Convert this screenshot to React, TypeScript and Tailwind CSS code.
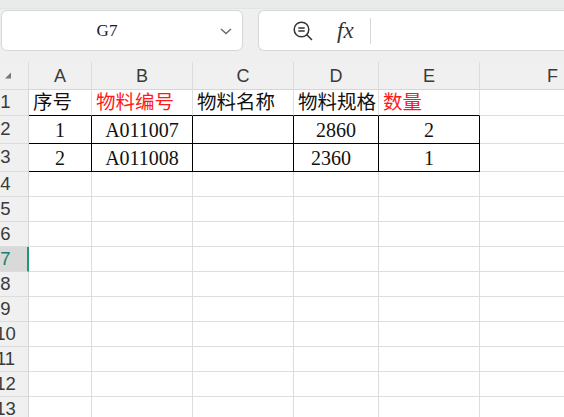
import React from "react";

const cols = ["A", "B", "C", "D", "E", "F"];
const serif = "font-['Liberation_Serif','Noto_Sans_CJK_SC',serif]";

type Cell = { t: string; c?: string; align?: "left" | "center"; cls?: string };

const data: Cell[][] = [
  [
    { t: "序号", align: "left" },
    { t: "物料编号", align: "left", c: "text-[#ff1a1a]" },
    { t: "物料名称", align: "left" },
    { t: "物料规格", align: "left" },
    { t: "数量", align: "left", c: "text-[#ff1a1a]" },
    { t: "" },
  ],
  [
    { t: "1", align: "center" },
    { t: "A011007", align: "center" },
    { t: "" },
    { t: "2860", align: "center" },
    { t: "2", align: "center" },
    { t: "" },
  ],
  [
    { t: "2", align: "center" },
    { t: "A011008", align: "center" },
    { t: "" },
    { t: "2360", align: "center", cls: "pr-[10px]" },
    { t: "1", align: "center" },
    { t: "" },
  ],
];

function RowHeader({ n, active }: { n: number; active?: boolean }) {
  return (
    <div
      className={
        "overflow-hidden flex items-center border-b border-[#dcdcdc] " +
        (active
          ? "bg-[#d9d9d9] border-r-[2px] border-r-[#1f9a6b] text-[#17806a]"
          : "bg-[#f0f0f0] border-r border-r-[#d4d4d4] text-[#3a3a3a]")
      }
    >
      <div className="w-[11px] flex justify-center shrink-0">
        <span className="whitespace-nowrap font-['Liberation_Sans',sans-serif] text-[18.5px] leading-none">
          {n}
        </span>
      </div>
    </div>
  );
}

export default function App() {
  const rows: React.ReactNode[] = [];
  for (let r = 0; r < 13; r++) {
    const n = r + 1;
    rows.push(<RowHeader key={"h" + n} n={n} active={n === 7} />);
    for (let c = 0; c < 6; c++) {
      const cell = r < 3 ? data[r][c] : { t: "" };
      const inBox = c < 5 && (r === 1 || r === 2);
      const aboveBox = c < 5 && r === 0;
      const rightBorder = inBox ? "border-r border-r-black" : "border-r border-r-[#dedede]";
      const bottomBorder = inBox || aboveBox ? "border-b border-b-black" : "border-b border-b-[#dedede]";
      rows.push(
        <div
          key={r + "-" + c}
          className={
            "flex items-center bg-white whitespace-nowrap overflow-visible " +
            rightBorder +
            " " +
            bottomBorder +
            " " +
            (cell.align === "center" ? "justify-center " : "justify-start pl-[4px] ") +
            (cell.cls ?? "")
          }
        >
          {cell.t && (
            <span
              className={
                serif +
                " leading-none " +
                (r === 0 ? "text-[19.5px] " : "text-[20px] ") +
                (cell.c ?? "text-[#111111]")
              }
            >
              {cell.t}
            </span>
          )}
        </div>
      );
    }
  }

  return (
    <div className="w-[564px] h-[417px] overflow-hidden bg-white">
      {/* top bar */}
      <div className="h-[62px] bg-[#efefef] relative">
        <div className="h-[9px] bg-[#e9ebeb] border-b border-[#e2e4e4]" />
        <div className="flex pt-[1px]">
          <div className="ml-[1px] w-[242px] h-[41px] bg-white rounded-[6px] border border-[#d6d6d6] flex items-center">
            <span className="w-[210px] text-center font-['Liberation_Serif',serif] text-[17px] text-[#1a1a1a]">
              G7
            </span>
            <svg width="14" height="10" viewBox="0 0 14 10" className="ml-[7px]">
              <path d="M2 3 L7 7.5 L12 3" fill="none" stroke="#6a6a6a" strokeWidth="1.4" />
            </svg>
          </div>
          <div className="ml-[15px] flex-1 h-[41px] bg-white rounded-l-[6px] border border-r-0 border-[#d6d6d6] flex items-center">
            <svg width="22" height="22" viewBox="0 0 22 22" className="ml-[33px]">
              <circle cx="9.5" cy="9.5" r="7.3" fill="none" stroke="#333" strokeWidth="1.5" />
              <path d="M14.8 14.8 L19.5 19.5" stroke="#333" strokeWidth="1.6" strokeLinecap="round" />
              <path d="M6.3 8 H12.7 M6.3 11 H12.7" stroke="#333" strokeWidth="1.4" />
            </svg>
            <span className="ml-[23px] font-['Liberation_Serif',serif] italic text-[23px] text-[#333] leading-none">
              fx
            </span>
            <div className="ml-[16px] w-px h-[26px] bg-[#d8d8d8]" />
          </div>
        </div>
      </div>
      {/* grid */}
      <div className="grid grid-cols-[29px_63px_101px_101px_85px_101px_146px] grid-rows-[28px_26px_28px_28px_repeat(10,25px)]">
        <div className="bg-[#f0f0f0] border-r border-b border-[#dcdcdc] flex items-start">
          <svg width="8" height="8" viewBox="0 0 8 8" className="ml-[4px] mt-[10px]">
            <path d="M7 0.5 L7 6.5 L1 6.5 Z" fill="#777" />
          </svg>
        </div>
        {cols.map((c) => (
          <div
            key={c}
            className="bg-[#f0f0f0] border-r border-b border-r-[#dcdcdc] border-b-[#d6d6d6] flex items-center justify-center"
          >
            <span className="font-['Liberation_Sans',sans-serif] text-[18px] text-[#3a3a3a] leading-none">
              {c}
            </span>
          </div>
        ))}
        {rows}
      </div>
    </div>
  );
}
